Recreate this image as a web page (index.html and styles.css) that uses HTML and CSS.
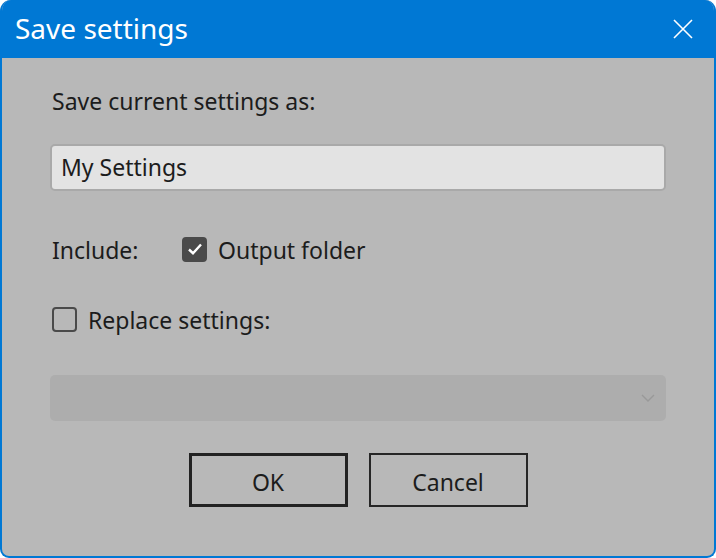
FILE: index.html
```html
<!DOCTYPE html>
<html>
<head>
<meta charset="utf-8">
<link rel="stylesheet" href="styles.css">
</head>
<body>
<div class="window">
  <div class="titlebar">
    <span class="title">Save settings</span>
    <svg class="close" width="20" height="20" viewBox="0 0 20 20"><path d="M1 1 L19 19 M19 1 L1 19" stroke="#fff" stroke-width="1.6" fill="none"/></svg>
  </div>
  <div class="content">
    <div class="label first">Save current settings as:</div>
    <div class="input">My Settings</div>
    <div class="row include">
      <span class="label-inline">Include:</span>
      <span class="check checked"><svg width="18" height="18" viewBox="0 0 18 18"><path d="M3 9.5 L7 13.2 L15 4.5" stroke="#fff" stroke-width="2.4" fill="none"/></svg></span>
      <span class="check-text">Output folder</span>
    </div>
    <div class="row replace">
      <span class="check"></span>
      <span class="check-text">Replace settings:</span>
    </div>
    <div class="select">
      <svg width="14" height="8" viewBox="0 0 14 8"><path d="M1 1 L7 7 L13 1" stroke="#999" stroke-width="1.4" fill="none"/></svg>
    </div>
    <div class="buttons">
      <button class="btn default">OK</button>
      <button class="btn">Cancel</button>
    </div>
  </div>
</div>
</body>
</html>
```
FILE: styles.css
```css
html, body {
  margin: 0;
  padding: 0;
  background: #ffffff;
}
body {
  font-family: "Noto Sans", "Open Sans", sans-serif;
  color: #1c1c1c;
}
.window {
  width: 716px;
  height: 558px;
  box-sizing: border-box;
  border: 2px solid #0078d4;
  border-top: none;
  border-radius: 11px 11px 9px 9px;
  background: #b8b8b8;
  overflow: hidden;
  display: flex;
  flex-direction: column;
}
.titlebar {
  height: 58px;
  flex: none;
  background: #0078d4;
  display: flex;
  align-items: center;
  justify-content: space-between;
  padding: 0 21px 0 13px;
}
.title {
  color: #ffffff;
  font-size: 28px;
  line-height: 34px;
  margin-top: -2px;
}
.close {
  display: block;
  margin-top: -1px;
}
.content {
  padding: 0 48px;
  display: flex;
  flex-direction: column;
}
.label {
  font-size: 23px;
  line-height: 28px;
  padding-left: 2px;
}
.label.first {
  margin-top: 29px;
}
.input {
  margin-top: 29px;
  height: 47px;
  box-sizing: border-box;
  border: 2px solid #a9a9a9;
  border-radius: 5px;
  background: #e3e3e3;
  font-size: 23px;
  line-height: 43px;
  padding-left: 9px;
}
.row {
  display: flex;
  align-items: center;
  height: 28px;
  font-size: 23px;
  padding-left: 2px;
}
.include {
  margin-top: 44px;
}
.replace {
  margin-top: 42px;
}
.label-inline {
  width: 130px;
  padding-top: 1px;
}
.check {
  width: 25px;
  height: 25px;
  box-sizing: border-box;
  border: 2px solid #4a4a4a;
  border-radius: 4px;
  display: flex;
  align-items: center;
  justify-content: center;
  flex: none;
}
.check.checked {
  background: #4a4a4a;
}
.check-text {
  margin-left: 11px;
  padding-top: 1px;
}
.select {
  margin-top: 42px;
  height: 46px;
  border-radius: 5px;
  background: #adadad;
  display: flex;
  align-items: center;
  justify-content: flex-end;
  padding-right: 11px;
}
.buttons {
  margin-top: 32px;
  display: flex;
  justify-content: center;
  gap: 21px;
}
.btn {
  width: 159px;
  height: 54px;
  box-sizing: border-box;
  border: 2px solid #262626;
  background: transparent;
  font-family: "Noto Sans", "Open Sans", sans-serif;
  font-size: 23px;
  color: #1c1c1c;
  padding: 3px 0 0 0;
}
.btn.default {
  border-width: 3px;
  border-color: #222;
}
```
